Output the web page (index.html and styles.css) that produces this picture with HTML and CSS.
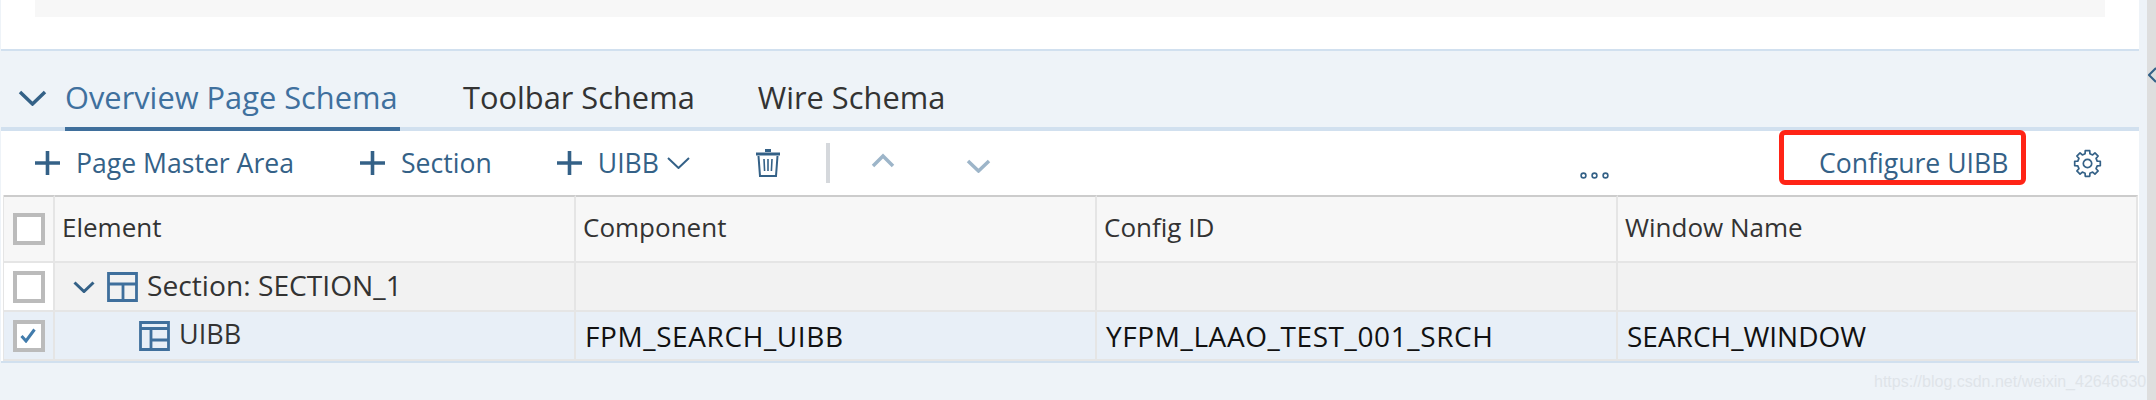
FILE: index.html
```html
<!DOCTYPE html>
<html lang="en">
<head>
  <meta charset="UTF-8" />
  <title>Overview Page Schema</title>
  <link rel="stylesheet" href="styles.css">
</head>
<body>
  <div class="page">
    <main class="main">
      <div class="top-area"><div class="top-block"></div></div>

      <div class="tabs">
        <svg class="tabs-toggle" viewBox="0 0 29 16"><path d="M2 2 L14.5 14 L27 2"/></svg>
        <span class="tab tab-active">Overview Page Schema</span>
        <span class="tab tab-toolbar">Toolbar Schema</span>
        <span class="tab tab-wire">Wire Schema</span>
      </div>

      <div class="toolbar">
        <span class="tool tool-master"><svg class="plus" viewBox="0 0 25 24"><path d="M12.5 0 V24 M0 12 H25"/></svg>Page Master Area</span>
        <span class="tool tool-section"><svg class="plus" viewBox="0 0 25 24"><path d="M12.5 0 V24 M0 12 H25"/></svg>Section</span>
        <span class="tool tool-uibb"><svg class="plus" viewBox="0 0 25 24"><path d="M12.5 0 V24 M0 12 H25"/></svg>UIBB<svg class="caret" viewBox="0 0 23 12"><path d="M1 1 L11.5 11 L22 1"/></svg></span>
        <svg class="trash" viewBox="0 0 24 28">
          <path class="trash-lid" d="M9 1.5 H15 M0 5 H24"/>
          <path class="trash-can" d="M2.5 7 L4 27 H20 L21.5 7"/>
          <path class="trash-bars" d="M8 10 L8.6 22 M12 10 V22 M16 10 L15.4 22"/>
        </svg>
        <span class="tool-sep"></span>
        <svg class="move move-up" viewBox="0 0 24 15"><path d="M2 13 L12 3 L22 13"/></svg>
        <svg class="move move-down" viewBox="0 0 25 14"><path d="M2 2 L12.5 12 L23 2"/></svg>
        <svg class="more" viewBox="0 0 29 7">
          <circle cx="3.5" cy="3.5" r="2.4"/><circle cx="14.5" cy="3.5" r="2.4"/><circle cx="25.5" cy="3.5" r="2.4"/>
        </svg>
        <span class="tool tool-configure">Configure UIBB</span>
        <svg class="gear" viewBox="-14.5 -14.5 29 29">
          <path d="M9.7 -2.42 L12.8 -2.26 L12.8 2.26 L9.7 2.42 L8.57 5.15 L10.65 7.46 L7.46 10.65 L5.15 8.57 L2.42 9.7 L2.26 12.8 L-2.26 12.8 L-2.42 9.7 L-5.15 8.57 L-7.46 10.65 L-10.65 7.46 L-8.57 5.15 L-9.7 2.42 L-12.8 2.26 L-12.8 -2.26 L-9.7 -2.42 L-8.57 -5.15 L-10.65 -7.46 L-7.46 -10.65 L-5.15 -8.57 L-2.42 -9.7 L-2.26 -12.8 L2.26 -12.8 L2.42 -9.7 L5.15 -8.57 L7.46 -10.65 L10.65 -7.46 L8.57 -5.15 Z"/>
          <circle cx="0" cy="0" r="4.2"/>
        </svg>
        <div class="annotation"></div>
      </div>

      <div class="table-wrap">
        <table class="schema-table">
          <colgroup>
            <col class="col-check"><col class="col-wide"><col class="col-wide"><col class="col-wide"><col class="col-last">
          </colgroup>
          <thead>
            <tr>
              <th class="check-cell"><span class="checkbox"></span></th>
              <th>Element</th>
              <th>Component</th>
              <th>Config ID</th>
              <th>Window Name</th>
            </tr>
          </thead>
          <tbody>
            <tr class="row-section">
              <td class="check-cell"><span class="checkbox"></span></td>
              <td>
                <div class="tree tree-section">
                  <svg class="tree-toggle" viewBox="0 0 22 12"><path d="M1.5 1.5 L11 10.5 L20.5 1.5"/></svg>
                  <svg class="tree-icon" viewBox="0 0 31 30"><path d="M1.5 1.5 H29.5 V28.5 H1.5 Z M1.5 12 H29.5 M16 12 V28.5"/></svg>
                  <span>Section: SECTION_1</span>
                </div>
              </td>
              <td></td>
              <td></td>
              <td></td>
            </tr>
            <tr class="row-selected">
              <td class="check-cell">
                <span class="checkbox"><svg class="tick" viewBox="0 0 16 15"><path d="M1.5 8 L6 13 L14.5 1.5"/></svg></span>
              </td>
              <td>
                <div class="tree tree-uibb">
                  <svg class="tree-icon" viewBox="0 0 31 30"><path d="M1.5 1.5 H29.5 V28.5 H1.5 Z M1.5 7.5 H29.5 M12 7.5 V28.5 M12 19 H29.5"/></svg>
                  <span>UIBB</span>
                </div>
              </td>
              <td class="value">FPM_SEARCH_UIBB</td>
              <td class="value">YFPM_LAAO_TEST_001_SRCH</td>
              <td class="value value-last">SEARCH_WINDOW</td>
            </tr>
          </tbody>
        </table>
      </div>
      <div class="watermark">https://blog.csdn.net/weixin_42646630</div>
    </main>

    <aside class="sash">
      <svg class="sash-arrow" viewBox="0 0 8 16"><path d="M8 1 L1 8 L8 15"/></svg>
    </aside>
  </div>
</body>
</html>
```

FILE: styles.css
```css
* {
  margin: 0;
  padding: 0;
  box-sizing: border-box;
}

body {
  width: 2156px;
  height: 400px;
  overflow: hidden;
  font-family: 'Open Sans', sans-serif;
  color: #333;
  background: #eef3f8;
}

svg {
  display: block;
  flex: none;
  fill: none;
}

.page {
  display: flex;
  height: 400px;
}

.main {
  position: relative;
  width: 2147px;
  padding-right: 8px;
  padding-left: 1px;
  background: #eef3f8;
}

.top-area {
  height: 49px;
  padding-left: 34px;
  background: #fff;
}

.top-block {
  width: 2070px;
  height: 17px;
  background: #f7f7f7;
}

/* tabs */
.tabs {
  display: flex;
  align-items: flex-end;
  height: 82px;
  padding-left: 17px;
  border-top: 2px solid #d1e0ef;
  border-bottom: 4px solid #d1e0ef;
}

.tabs-toggle {
  width: 29px;
  height: 16px;
  margin-bottom: 21px;
  stroke: #346187;
  stroke-width: 3.5;
}

.tab {
  height: 57px;
  font-size: 30.8px;
  line-height: 46px;
  margin-bottom: -4px;
  white-space: nowrap;
}

.tab-active {
  margin-left: 18px;
  width: 335px;
  color: #3f709e;
  border-bottom: 4px solid #3f6f9c;
}

.tab-toolbar {
  margin-left: 63px;
}

.tab-wire {
  margin-left: 63px;
}

/* toolbar */
.toolbar {
  position: relative;
  display: flex;
  align-items: center;
  height: 64px;
  padding-left: 34px;
  background: #fff;
}

.tool {
  display: flex;
  align-items: center;
  font-size: 26.6px;
  color: #346187;
  white-space: nowrap;
}

.plus {
  width: 25px;
  height: 24px;
  margin-right: 16px;
  stroke: #346187;
  stroke-width: 3.6;
}

.tool-section {
  margin-left: 66px;
}

.tool-uibb {
  margin-left: 65px;
}

.caret {
  width: 23px;
  height: 12px;
  margin-left: 8px;
  stroke: #346187;
  stroke-width: 2;
}

.trash {
  width: 24px;
  height: 28px;
  margin-left: 66px;
  stroke: #346187;
}

.trash-lid {
  stroke-width: 3;
}

.trash-can {
  stroke-width: 2;
}

.trash-bars {
  stroke-width: 1.6;
}

.tool-sep {
  width: 4px;
  height: 40px;
  margin-left: 46px;
  background: #d5d8dc;
}

.move {
  stroke: #9db5c9;
  stroke-width: 3.5;
}

.move-up {
  width: 24px;
  height: 15px;
  margin-left: 41px;
  margin-bottom: 5px;
}

.move-down {
  width: 25px;
  height: 14px;
  margin-left: 71px;
  margin-top: 6px;
}

.more {
  width: 29px;
  height: 7px;
  margin-left: 589px;
  margin-top: 24px;
  stroke: #346187;
  stroke-width: 1.6;
}

.tool-configure {
  margin-left: 210px;
}

.gear {
  width: 29px;
  height: 29px;
  margin-left: 65px;
  stroke: #346187;
  stroke-width: 1.7;
  stroke-linejoin: round;
}

.annotation {
  position: absolute;
  left: 1778px;
  top: -1px;
  width: 247px;
  height: 55px;
  border: 5px solid #ff2416;
  border-radius: 6px;
}

/* table */
.table-wrap {
  padding-left: 2px;
  padding-right: 2px;
  border-bottom: 2px solid #d1e0ef;
  background: #fff;
}

.schema-table {
  width: 2134px;
  table-layout: fixed;
  border-collapse: separate;
  border-spacing: 0;
  border-left: 1px solid #e5e5e5;
}

.col-check {
  width: 51px;
}

.col-wide {
  width: 521px;
}

.col-last {
  width: 520px;
}

.schema-table th,
.schema-table td {
  border-right: 2px solid #e5e5e5;
  border-bottom: 2px solid #e5e5e5;
  font-size: 26px;
  font-weight: 400;
  text-align: left;
  white-space: nowrap;
  padding-left: 7px;
}

.schema-table th {
  height: 68px;
  padding-bottom: 4px;
  border-top: 2px solid #ccc;
  background: #f7f7f7;
}

.row-section td {
  height: 49px;
  background: #f2f2f2;
}

.row-section .check-cell {
  background: #fff;
}

.row-selected td {
  height: 49px;
  background: #e8eff7;
}

.schema-table .value {
  padding-left: 9px;
  font-size: 28px;
  letter-spacing: 0.6px;
  color: #111;
}

.schema-table .value-last {
  letter-spacing: 0;
}

.schema-table .check-cell {
  padding-left: 9px;
  padding-bottom: 0;
}

.checkbox {
  display: block;
  width: 32px;
  height: 32px;
  padding: 4px 3px;
  border: 4px solid #bbb;
  background: #fff;
}

.tick {
  width: 16px;
  height: 15px;
  stroke: #427cac;
  stroke-width: 3;
}

.tree {
  display: flex;
  align-items: center;
  font-size: 28.2px;
}

.tree-section {
  padding-left: 11px;
}

.tree-uibb {
  padding-left: 77px;
  font-size: 27px;
}

.tree-section span,
.tree-uibb span {
  margin-top: -4px;
}

.tree-toggle {
  width: 22px;
  height: 12px;
  margin-right: 12px;
  stroke: #346187;
  stroke-width: 3;
}

.tree-icon {
  width: 31px;
  height: 30px;
  margin-right: 9px;
  stroke: #3f6f9c;
  stroke-width: 2.8;
}

.watermark {
  position: absolute;
  left: 1874px;
  top: 373px;
  font-family: 'Liberation Sans', sans-serif;
  font-size: 16px;
  color: #dfe4e9;
  white-space: nowrap;
}

/* right sash */
.sash {
  width: 9px;
  padding-top: 67px;
  background: #dedede;
}

.sash-arrow {
  width: 8px;
  height: 16px;
  margin-left: 1px;
  stroke: #346187;
  stroke-width: 2;
}
```
